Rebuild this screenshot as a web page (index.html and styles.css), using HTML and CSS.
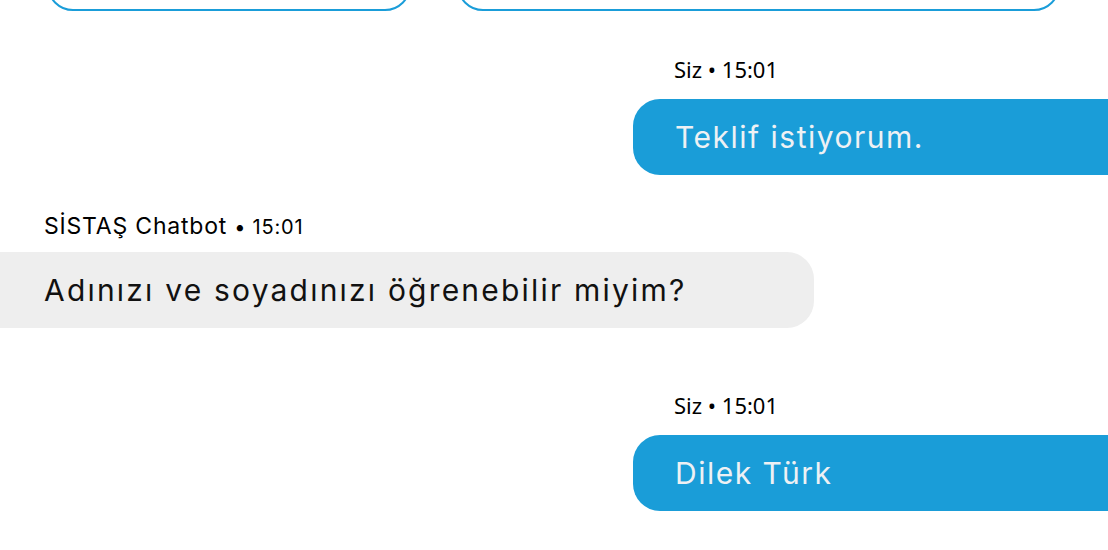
FILE: index.html
```html
<!DOCTYPE html>
<html lang="tr">
<head>
<meta charset="utf-8">
<title>SİSTAŞ Chatbot</title>
<link rel="stylesheet" href="styles.css">
</head>
<body>
<div class="chat">
  <div class="quick-replies">
    <button class="qr qr-short" type="button"></button>
    <button class="qr qr-long" type="button"></button>
  </div>

  <div class="msg msg-user msg-first">
    <div class="meta">Siz • 15:01</div>
    <div class="bubble">Teklif istiyorum.</div>
  </div>

  <div class="msg msg-bot">
    <div class="meta meta-bot"><span class="name">SİSTAŞ Chatbot</span> <span class="time">• 15:01</span></div>
    <div class="bubble">Adınızı ve soyadınızı öğrenebilir miyim?</div>
  </div>

  <div class="msg msg-user msg-second">
    <div class="meta">Siz • 15:01</div>
    <div class="bubble">Dilek Türk</div>
  </div>
</div>
</body>
</html>
```

FILE: styles.css
```css
html, body {
  margin: 0;
  padding: 0;
  background: #ffffff;
}

body {
  width: 1108px;
  height: 550px;
  overflow: hidden;
  font-family: "Inter", "Noto Sans", sans-serif;
}

.chat {
  display: flex;
  flex-direction: column;
}

.quick-replies {
  display: flex;
  gap: 46px;
  padding-left: 47px;
  margin-top: -49px;
}

.qr {
  height: 60px;
  border: 2px solid #1a9dd9;
  border-radius: 26px;
  background: #ffffff;
  padding: 0;
}

.qr-short { width: 364px; }
.qr-long { width: 603px; }

.msg {
  display: flex;
  flex-direction: column;
}

.meta {
  font-family: "Noto Sans", "Open Sans", sans-serif;
  font-size: 22px;
  line-height: 28px;
  color: #000000;
}

.bubble {
  height: 76px;
  display: flex;
  align-items: center;
  font-size: 30px;
  letter-spacing: 1.5px;
}

.msg-user {
  padding-left: 633px;
}

.msg-user .meta {
  padding-left: 41px;
}

.msg-user .bubble {
  margin-top: 16px;
  padding-left: 42px;
  background: #1a9dd8;
  color: #eef1f4;
  border-radius: 27px 0 0 27px;
}

.msg-first { margin-top: 44px; }
.msg-second { margin-top: 63px; }

.msg-bot {
  margin-top: 37px;
  padding-right: 294px;
}

.meta-bot {
  padding-left: 44px;
  font-family: "Inter", "Noto Sans", sans-serif;
  letter-spacing: 0.8px;
}

.meta-bot .name {
  font-size: 23px;
}

.meta-bot .time {
  font-size: 20px;
}

.msg-bot .bubble {
  margin-top: 11px;
  padding-left: 44px;
  background: #eeeeee;
  color: #111111;
  border-radius: 0 27px 27px 0;
  letter-spacing: 2.2px;
}
```
